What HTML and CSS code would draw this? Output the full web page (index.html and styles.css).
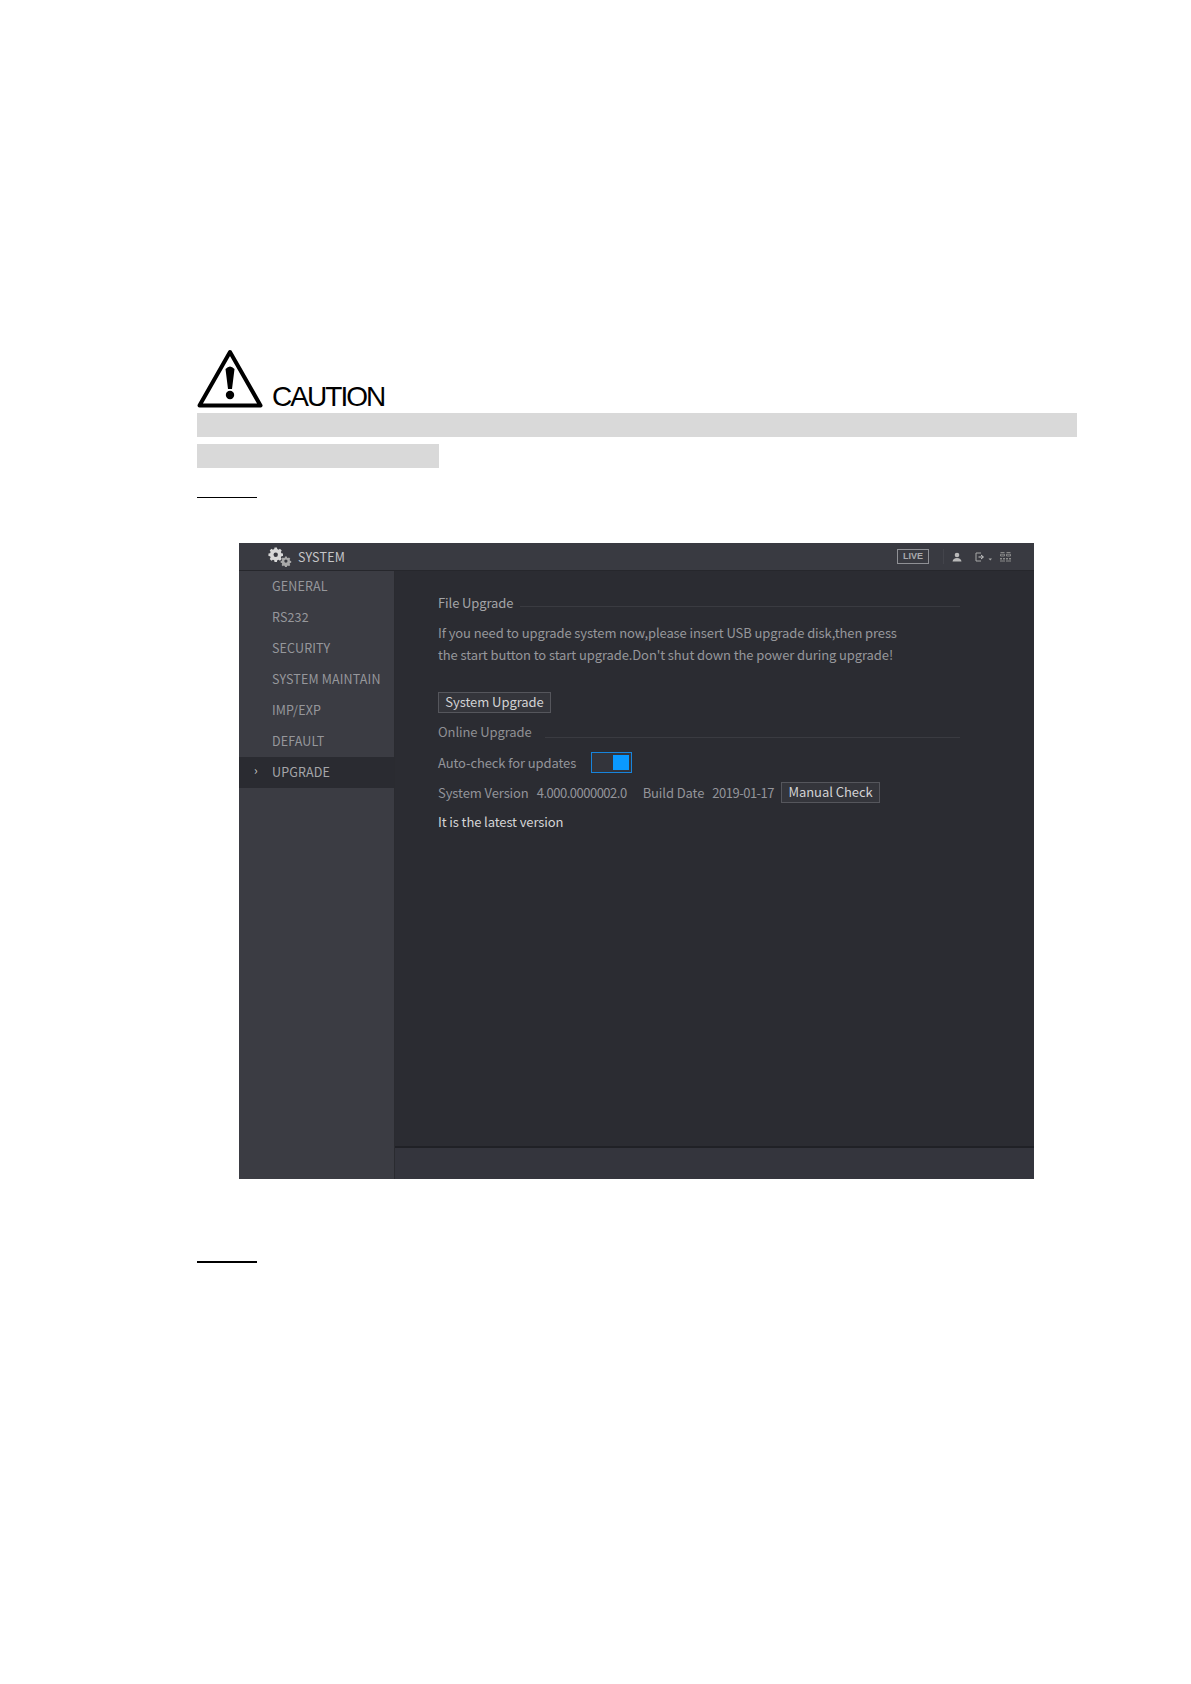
FILE: index.html
```html
<!DOCTYPE html>
<html lang="en">
<head>
<meta charset="utf-8">
<title>System Upgrade</title>
<link rel="stylesheet" href="styles.css">
</head>
<body>
<div class="doc">
  <div class="caution">
    <svg class="warn" viewBox="0 0 66 59" width="66" height="59">
      <path d="M33 3 L63.5 56.5 H2.5 Z" fill="none" stroke="#000" stroke-width="4" stroke-linejoin="round"/>
      <path d="M28.5 20 Q33 15 37.5 20 L35 40 H31 Z" fill="#000"/>
      <circle cx="33" cy="46" r="4.2" fill="#000"/>
    </svg>
    <span class="caution-word">CAUTION</span>
  </div>
  <div class="redact redact-long"></div>
  <div class="redact redact-short"></div>
  <div class="step-rule step-rule-one"></div>

  <div class="shot">
    <header class="topbar">
      <div class="brand">
        <svg class="gears" viewBox="0 0 26 22" width="24" height="20">
          <path fill="#d8d8d8" d="M7 0.5h2.6l.4 1.8 1.4.6 1.6-1 1.9 1.9-1 1.6.6 1.4 1.8.4v2.6l-1.8.4-.6 1.4 1 1.6-1.9 1.9-1.6-1-1.4.6-.4 1.8H7l-.4-1.8-1.4-.6-1.6 1-1.9-1.9 1-1.6-.6-1.4-1.8-.4V7.2l1.8-.4.6-1.4-1-1.6 1.9-1.9 1.6 1 1.4-.6z"/>
          <circle cx="8.3" cy="8.5" r="2.4" fill="#393a41"/>
          <path fill="#a9a9a9" d="M18.5 10.5h2l.3 1.3 1 .4 1.1-.7 1.4 1.4-.7 1.1.4 1 1.3.3v2l-1.3.3-.4 1 .7 1.1-1.4 1.4-1.1-.7-1 .4-.3 1.3h-2l-.3-1.3-1-.4-1.1.7-1.4-1.4.7-1.1-.4-1-1.3-.3v-2l1.3-.3.4-1-.7-1.1 1.4-1.4 1.1.7 1-.4z"/>
          <circle cx="19.5" cy="15.5" r="1.8" fill="#393a41"/>
        </svg>
        <span class="brand-name">SYSTEM</span>
      </div>
      <div class="tools">
        <span class="live">LIVE</span>
        <span class="tool-sep"></span>
        <svg class="tool-user" viewBox="0 0 10 10" width="10" height="10">
          <circle cx="5" cy="3" r="2.3" fill="#b9b9b9"/>
          <path d="M0.5 9.5 Q1 6 5 6 Q9 6 9.5 9.5 Z" fill="#b9b9b9"/>
        </svg>
        <svg class="tool-exit" viewBox="0 0 18 10" width="18" height="10">
          <path d="M6 1 H1 V9 H6" fill="none" stroke="#a8a8a8"/>
          <path d="M3.5 5 H8 M6 3 L8.5 5 L6 7" fill="none" stroke="#c8c8c8"/>
          <path d="M13.5 6.5 H17 L15.25 8.5 Z" fill="#a8a8a8"/>
        </svg>
        <svg class="tool-grid" viewBox="0 0 11 10" width="11" height="10">
          <path d="M0.5 0.5 H4.5 M0.5 2.2 H4.5 V4 H0.5 Z M6.5 0.5 H10.5 M6.5 2.2 H10.5 V4 H6.5 Z" fill="none" stroke="#8f8f8f" stroke-width="0.9"/>
          <path d="M0 6 H2 V7.5 H0 Z M3 6 H5 V7.5 H3 Z M6 6 H8 V7.5 H6 Z M9 6 H11 V7.5 H9 Z M0 8.5 H5 V9.5 H0 Z M6 8.5 H11 V9.5 H6 Z" fill="#8c8c8c"/>
        </svg>
      </div>
    </header>
    <div class="shot-body">
      <nav class="side">
        <a class="side-item">GENERAL</a>
        <a class="side-item">RS232</a>
        <a class="side-item">SECURITY</a>
        <a class="side-item">SYSTEM MAINTAIN</a>
        <a class="side-item">IMP/EXP</a>
        <a class="side-item">DEFAULT</a>
        <a class="side-item side-item-on"><span class="chev">›</span>UPGRADE</a>
      </nav>
      <div class="main">
        <div class="content">
          <div class="legend legend-first"><span>File Upgrade</span><i class="legend-line"></i></div>
          <p class="para">If you need to upgrade system now,please insert USB upgrade disk,then press<br>the start button to start upgrade.Don't shut down the power during upgrade!</p>
          <button class="btn btn-upgrade">System Upgrade</button>
          <div class="legend legend-second"><span>Online Upgrade</span><i class="legend-line"></i></div>
          <div class="row">
            <span>Auto-check for updates</span>
            <span class="toggle"><span class="knob"></span></span>
          </div>
          <div class="row row-version">
            <span>System Version</span>
            <span class="ver">4.000.0000002.0</span>
            <span class="build">Build Date</span>
            <span class="ver">2019-01-17</span>
            <button class="btn btn-check">Manual Check</button>
          </div>
          <div class="latest">It is the latest version</div>
        </div>
        <div class="foot"></div>
      </div>
    </div>
  </div>

  <div class="step-rule step-rule-two"></div>
</div>
</body>
</html>
```
FILE: styles.css
```css
* { box-sizing: border-box; }
html, body { margin: 0; padding: 0; background: #fff; }
body { height: 1684px; overflow: hidden; }
.doc { padding: 349px 0 0 197px; width: 1191px; font-family: "Noto Sans CJK SC", "Noto Sans", sans-serif; }

.caution { display: flex; align-items: flex-end; height: 59px; }
.warn { display: block; flex: none; }
.caution-word {
  font-family: "Liberation Sans", Arial, sans-serif;
  font-size: 28px;
  line-height: 22px;
  letter-spacing: -1.95px;
  color: #000;
  margin-left: 9px;
}
.redact { background: #d9d9d9; height: 24px; }
.redact-long { width: 880px; margin-top: 5px; }
.redact-short { width: 242px; margin-top: 7px; }
.step-rule { width: 60px; background: #000; height: 1px; }
.step-rule-one { margin-top: 29px; }
.step-rule-two { margin-top: 82px; height: 2px; }

.shot {
  margin: 45px 0 0 42px;
  width: 795px;
  height: 636px;
  display: flex;
  flex-direction: column;
  background: #2b2c32;
  color: #9b9ca0;
  font-size: 13px;
  letter-spacing: -0.1px;
}
.topbar {
  height: 28px;
  flex: none;
  display: flex;
  align-items: center;
  justify-content: space-between;
  background: #393a41;
  border-bottom: 1px solid #26272c;
  padding: 0 23px 0 29px;
}
.brand { display: flex; align-items: center; }
.gears { display: block; margin-top: 1px; }
.brand-name { margin-left: 6px; color: #c5c5c8; font-size: 12.5px; letter-spacing: 0.2px; }
.tools { display: flex; align-items: center; }
.live {
  width: 32px;
  height: 15px;
  border: 1px solid #8f9095;
  color: #a9aaad;
  font-family: "Liberation Sans", Arial, sans-serif;
  font-size: 9px;
  font-weight: 700;
  letter-spacing: 0;
  line-height: 13px;
  text-align: center;
}
.tool-sep { width: 1px; height: 15px; background: #43444b; margin: 0 8px 0 14px; }
.tool-exit { margin-left: 13px; }
.tool-grid { margin-left: 7px; }

.shot-body { flex: 1; display: flex; min-height: 0; }
.side {
  width: 156px;
  flex: none;
  background: #3b3c43;
  border-right: 1px solid #2a2b30;
  display: flex;
  flex-direction: column;
}
.side-item {
  height: 31px;
  display: flex;
  align-items: center;
  padding: 0 0 2px 33px;
  color: #96979b;
  position: relative;
  font-size: 12.5px;
  letter-spacing: 0.15px;
}
.side-item-on { background: #2a2b31; color: #a5a6a9; }
.chev { position: absolute; left: 15px; top: 4px; color: #c8c8c8; font-size: 12px; }

.main { flex: 1; display: flex; flex-direction: column; min-width: 0; }
.content { flex: 1; padding: 0 0 0 43px; }
.legend { display: flex; align-items: center; height: 18px; width: 522px; }
.legend span { flex: none; color: #a3a4a7; }
.legend-line { flex: 1; height: 1px; background: #3a3b41; margin: 8px 0 0 7px; }
.legend-first { margin-top: 22px; }
.legend-second { margin-top: 9px; }
.legend-second span { color: #8f9094; }
.legend-second .legend-line { margin: 12px 0 0 13px; }
.para { margin: 11px 0 0; line-height: 22px; color: #96979b; }
.btn {
  font-family: inherit;
  font-size: 13px;
  letter-spacing: -0.05px;
  color: #d2d2d4;
  background: #34353b;
  border: 1px solid #55565c;
  height: 21px;
  padding: 0 0 1px;
  line-height: 18px;
  display: block;
}
.btn-upgrade { width: 113px; margin-top: 26px; }
.row { display: flex; align-items: center; height: 21px; margin-top: 9px; color: #93949a; }
.legend-second + .row { margin-top: 12px; }
.toggle {
  width: 41px;
  height: 21px;
  margin-left: 15px;
  border: 1px solid #1784dc;
  background: #33343b;
  padding: 2px;
  display: flex;
  justify-content: flex-end;
}
.knob { width: 16px; background: #0a99ff; }
.ver { margin-left: 8px; letter-spacing: -0.5px; }
.build { margin-left: 16px; }
.btn-check { width: 99px; margin-left: 7px; }
.latest { margin-top: 8px; height: 21px; line-height: 21px; color: #d4d4d6; }
.foot {
  height: 33px;
  flex: none;
  background: #34353d;
  border-top: 2px solid #202126;
}
```
